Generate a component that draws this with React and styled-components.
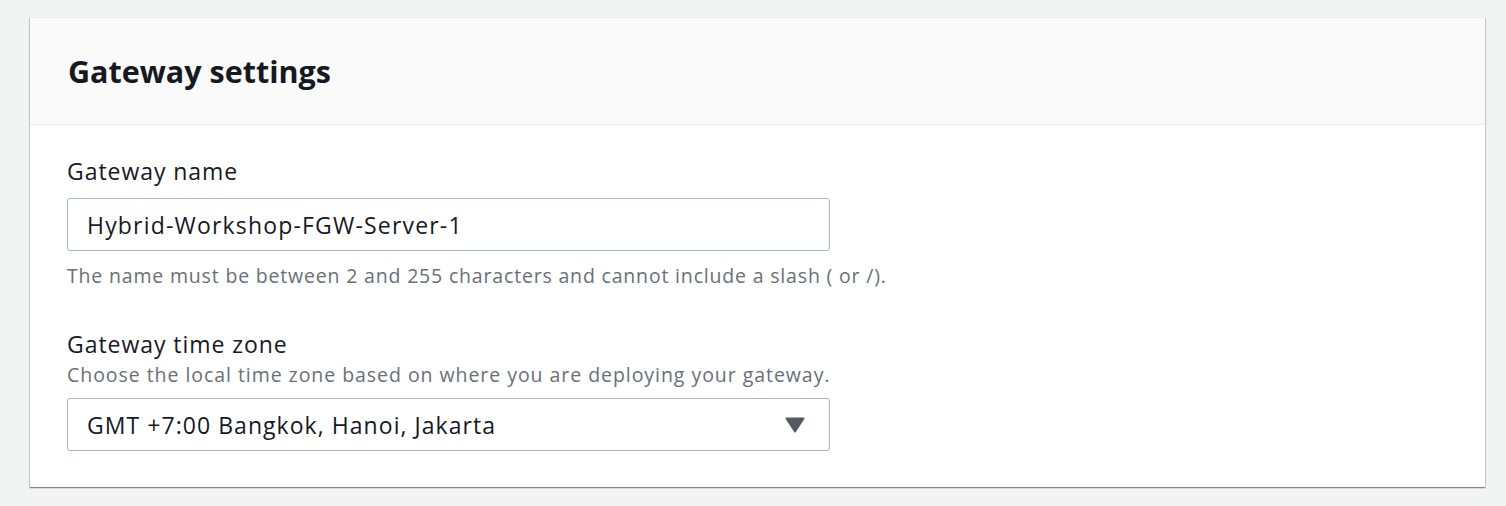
import styled, { createGlobalStyle } from "styled-components";

const GlobalStyle = createGlobalStyle`
  body {
    margin: 0;
    background: #f2f3f3;
    font-family: "Open Sans", "Noto Sans", sans-serif;
    color: #16191f;
  }
`;

const Page = styled.div`
  padding: 17px 21px 18px 30px;
`;

const Card = styled.section`
  background: #ffffff;
  box-shadow: 0 1px 1px 0 rgba(0, 28, 36, 0.3), 1px 1px 1px 0 rgba(0, 28, 36, 0.15),
    -1px 1px 1px 0 rgba(0, 28, 36, 0.15);
  border-top: 1px solid #eaeded;
`;

const Header = styled.header`
  background: #fafafa;
  border-bottom: 1px solid #eaeded;
  height: 106px;
  padding: 0 38px;
  display: flex;
  align-items: center;
`;

const Title = styled.h2`
  margin: 0;
  font-size: 30.5px;
  font-weight: 700;
  color: #16191f;
`;

const Body = styled.div`
  padding: 31px 37px 36px;
  display: flex;
  flex-direction: column;
  gap: 39px;
`;

const Field = styled.div`
  display: flex;
  flex-direction: column;
`;

const Label = styled.label`
  font-size: 23px;
  line-height: 30px;
  letter-spacing: 0.95px;
  color: #16191f;
  margin-bottom: ${(p) => (p.$tight ? "2px" : "12px")};
`;

const Hint = styled.div`
  font-size: 19.5px;
  line-height: 28px;
  letter-spacing: ${(p) => (p.$above ? "0.95px" : "0.82px")};
  color: #687078;
  margin: ${(p) => (p.$above ? "0 0 9px" : "11px 0 0")};
`;

const Control = styled.div`
  width: 763px;
  height: 53px;
  box-sizing: border-box;
  border: 1px solid #aab7b8;
  border-radius: 3px;
  background: #ffffff;
  display: flex;
  align-items: center;
  justify-content: space-between;
  padding: 0 24px 0 19px;
  font-size: 23px;
  letter-spacing: ${(p) => (p.$select ? "1.05px" : "1.18px")};
  color: #16191f;
`;

const Caret = styled.svg`
  width: 20px;
  height: 16px;
  fill: #545b64;
`;

export default function App() {
  return (
    <>
      <GlobalStyle />
      <Page>
        <Card>
          <Header>
            <Title>Gateway settings</Title>
          </Header>
          <Body>
            <Field>
              <Label>Gateway name</Label>
              <Control>Hybrid-Workshop-FGW-Server-1</Control>
              <Hint>
                The name must be between 2 and 255 characters and cannot include a slash ( or /).
              </Hint>
            </Field>
            <Field>
              <Label $tight>Gateway time zone</Label>
              <Hint $above>Choose the local time zone based on where you are deploying your gateway.</Hint>
              <Control $select>
                <span>GMT +7:00 Bangkok, Hanoi, Jakarta</span>
                <Caret viewBox="0 0 20 16">
                  <path d="M1.5 1.5 H18.5 L10 14.5 Z" strokeLinejoin="round" stroke="#545b64" strokeWidth="2" />
                </Caret>
              </Control>
            </Field>
          </Body>
        </Card>
      </Page>
    </>
  );
}
